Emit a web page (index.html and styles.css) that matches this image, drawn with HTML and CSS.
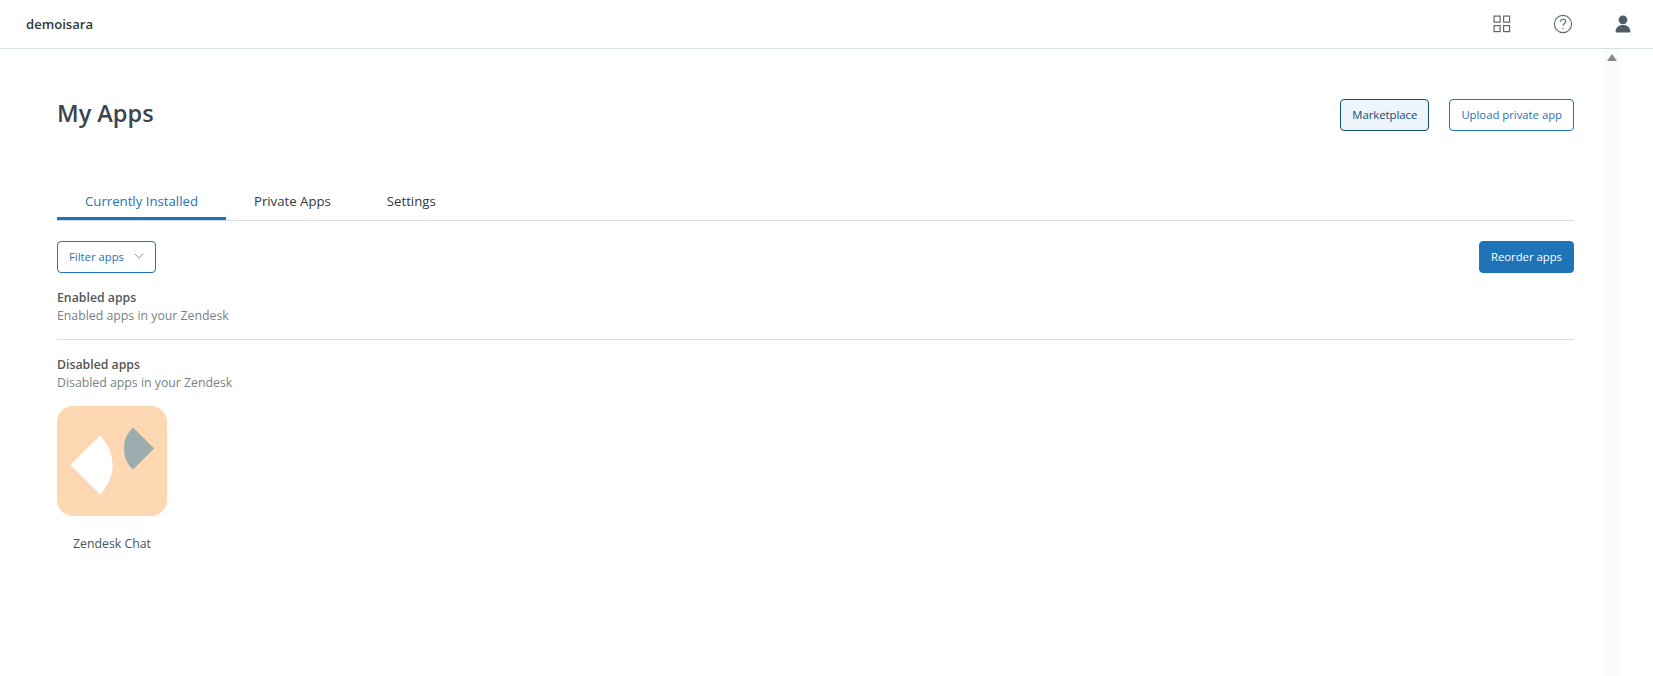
FILE: index.html
```html
<!DOCTYPE html>
<html lang="en">
<head>
<meta charset="UTF-8">
<meta name="viewport" content="width=device-width, initial-scale=1.0">
<title>My Apps</title>
<link rel="stylesheet" href="styles.css">
</head>
<body>

<header class="topbar">
  <span class="account">demoisara</span>
  <div class="topbar-icons">
    <svg class="icon" width="18" height="18" viewBox="0 0 18 18" fill="none" stroke="#5c6970" stroke-width="1.2">
      <rect x="1.1" y="1.1" width="6" height="6"/>
      <rect x="10.6" y="1.1" width="6" height="6"/>
      <rect x="1.1" y="10.6" width="6" height="6"/>
      <rect x="10.6" y="10.6" width="6" height="6"/>
    </svg>
    <svg class="icon" width="20" height="20" viewBox="0 0 20 20" fill="none" stroke="#5c6970" stroke-width="1.1">
      <circle cx="10" cy="10" r="8.6"/>
      <path d="M7.4 7.8c0-1.6 1.2-2.6 2.7-2.6s2.6 1 2.6 2.3c0 2-2.7 2-2.7 4.2"/>
      <circle cx="10" cy="14.4" r=".7" fill="#5c6970" stroke="none"/>
    </svg>
    <svg class="icon" width="16" height="18" viewBox="0 0 16 18" fill="#4f5d66">
      <circle cx="8" cy="4.8" r="4.4"/>
      <path d="M.6 16.6c0-4.2 3-6.6 7.4-6.6s7.400 2.400 7.400 6.600c0 .5-.3.8-.8.8H1.400c-.5 0-.8-.3-.8-.8z"/>
    </svg>
  </div>
</header>

<div class="scroll-track"><span class="scroll-arrow"></span></div>

<main class="page">
  <div class="page-head">
    <h1>My Apps</h1>
    <div class="head-actions">
      <button class="btn btn-active">Marketplace</button>
      <button class="btn">Upload private app</button>
    </div>
  </div>

  <nav class="tabs">
    <a class="tab tab-current">Currently Installed</a>
    <a class="tab">Private Apps</a>
    <a class="tab">Settings</a>
  </nav>

  <div class="toolbar">
    <button class="btn btn-filter">Filter apps
      <svg width="10" height="6" viewBox="0 0 10 6" fill="none" stroke="#5b9bcf" stroke-width=".9"><path d="M.8.8 5 5 9.200.8"/></svg>
    </button>
    <button class="btn btn-primary">Reorder apps</button>
  </div>

  <section class="group group-line">
    <h2>Enabled apps</h2>
    <p>Enabled apps in your Zendesk</p>
  </section>

  <section class="group">
    <h2>Disabled apps</h2>
    <p>Disabled apps in your Zendesk</p>
    <div class="app-card">
      <div class="app-tile">
        <svg width="110" height="110" viewBox="0 0 110 110">
          <path d="M13.500 59 43 29.500c8 8.500 12.500 18.500 12.500 29.500S51 80 43 88.500z" fill="#fff"/>
          <path d="M97 42.500 76 63.500c-5.500-5-9-12-9-21s3.500-16 9-21z" fill="#9badaf"/>
        </svg>
      </div>
      <span class="app-name">Zendesk Chat</span>
    </div>
  </section>
</main>

</body>
</html>
```

FILE: styles.css
```css
body {
  margin: 0;
  background: #fff;
  font-family: "Open Sans", "Noto Sans", sans-serif;
  font-size: 12.3px;
  color: #2f3941;
}

.topbar {
  height: 48px;
  border-bottom: 1px solid #d8dce3;
  display: flex;
  align-items: center;
  justify-content: space-between;
  padding-left: 26px;
  padding-right: 22px;
}
.account {
  font-size: 13.100px;
  font-weight: 600;
  color: #2f3941;
}
.topbar-icons {
  display: flex;
  align-items: center;
  gap: 42px;
}

.scroll-track {
  position: absolute;
  top: 49px;
  right: 34px;
  bottom: 0;
  width: 15px;
  background: #fbfbfb;
}
.scroll-arrow {
  position: absolute;
  top: 5px;
  left: 3px;
  border-left: 5px solid transparent;
  border-right: 5px solid transparent;
  border-bottom: 7px solid #8a8a8a;
}

.page {
  padding: 50px 79px 0 57px;
}
.page-head {
  display: flex;
  justify-content: space-between;
  align-items: center;
  height: 32px;
}
h1 {
  margin: 0 0 4px;
  font-size: 23.500px;
  font-weight: 600;
  color: #3a4550;
}
.head-actions {
  display: flex;
  gap: 20px;
}

.btn {
  height: 32px;
  padding: 0 11px 2px;
  border: 1px solid #1f73b7;
  border-radius: 4px;
  background: #fff;
  color: #1f73b7;
  font-family: inherit;
  font-size: 11.300px;
}
.btn-active {
  background: #edf4fa;
  border-color: #144a75;
  color: #144a75;
}
.btn-primary {
  background: #1f73b7;
  color: #fff;
}
.btn-filter {
  display: flex;
  align-items: center;
  gap: 10px;
}

.tabs {
  display: flex;
  margin-top: 55px;
  border-bottom: 1px solid #d8dce3;
}
.tab {
  height: 34px;
  padding: 0 28px;
  line-height: 30px;
  font-size: 13.200px;
  color: #2f3941;
}
.tab-current {
  color: #1f73b7;
  border-bottom: 3px solid #1f73b7;
  box-sizing: border-box;
  margin-bottom: -1px;
}

.toolbar {
  display: flex;
  justify-content: space-between;
  margin-top: 20px;
}

.group {
  margin-top: 16px;
}
.group-line {
  padding-bottom: 14px;
  border-bottom: 1px solid #d8dce3;
}
h2 {
  margin: 0;
  font-size: 12.300px;
  line-height: 18px;
  font-weight: 600;
  color: #555;
}
.group p {
  margin: 0;
  line-height: 18px;
  color: #7a7f85;
}

.app-card {
  width: 110px;
  margin-top: 14px;
  text-align: center;
}
.app-tile {
  height: 110px;
  border-radius: 16px;
  background: #fdd8b3;
  overflow: hidden;
}
.app-tile svg {
  display: block;
}
.app-name {
  display: block;
  margin-top: 19px;
  line-height: 18px;
  color: #49545c;
}
```
